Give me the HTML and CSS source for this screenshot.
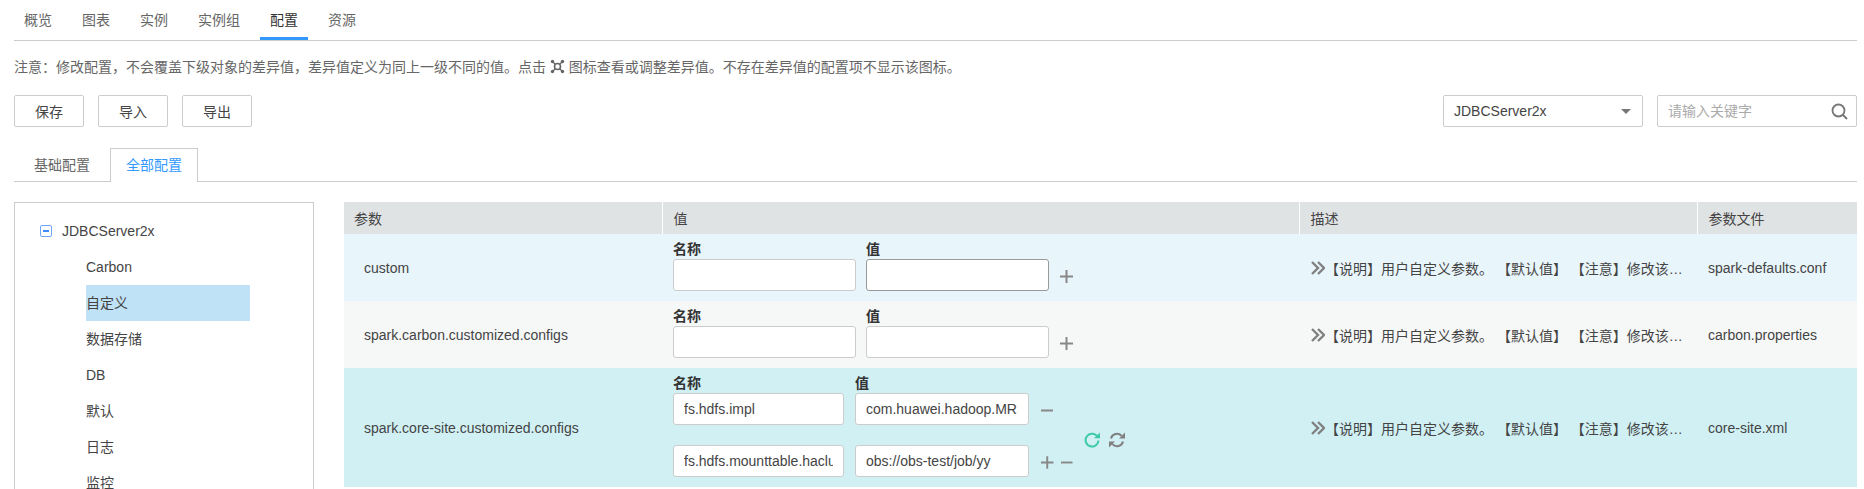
FILE: index.html
```html
<!DOCTYPE html>
<html lang="zh-CN">
<head>
    <meta charset="UTF-8">
    <meta name="viewport" content="width=device-width, initial-scale=1.0">
    <title>配置</title>
    <link rel="stylesheet" href="styles.css">
</head>
<body>
    <div class="page">
        <div class="main-tabs">
            <a class="main-tab">概览</a>
            <a class="main-tab">图表</a>
            <a class="main-tab">实例</a>
            <a class="main-tab">实例组</a>
            <a class="main-tab active">配置</a>
            <a class="main-tab">资源</a>
        </div>

        <p class="note">注意：修改配置，不会覆盖下级对象的差异值，差异值定义为同上一级不同的值。点击
            <svg class="note-icon" viewBox="0 0 15 15" width="15" height="15">
                <path d="M3 3L12 12M12 3L3 12" stroke="#666" stroke-width="1.3" fill="none"/>
                <circle cx="7.5" cy="7.5" r="3" fill="#fff" stroke="#666" stroke-width="1.6"/>
                <circle cx="2.5" cy="2.5" r="1.7" fill="#666"/>
                <circle cx="12.5" cy="2.5" r="1.7" fill="#666"/>
                <circle cx="2.5" cy="12.5" r="1.7" fill="#666"/>
                <circle cx="12.5" cy="12.5" r="1.7" fill="#666"/>
            </svg>
            图标查看或调整差异值。不存在差异值的配置项不显示该图标。</p>

        <div class="toolbar">
            <div class="btn-group">
                <button class="btn">保存</button>
                <button class="btn">导入</button>
                <button class="btn">导出</button>
            </div>
            <div class="filters">
                <div class="select">
                    <span>JDBCServer2x</span>
                    <i class="select-arrow"></i>
                </div>
                <div class="search">
                    <input type="text" placeholder="请输入关键字">
                    <svg viewBox="0 0 17 17" width="17" height="17">
                        <circle cx="7.5" cy="7.5" r="6" fill="none" stroke="#777" stroke-width="1.8"/>
                        <path d="M11.5 11.5L16 16" stroke="#777" stroke-width="2" fill="none"/>
                    </svg>
                </div>
            </div>
        </div>

        <div class="sub-tabs">
            <a class="sub-tab">基础配置</a>
            <a class="sub-tab active">全部配置</a>
        </div>

        <div class="content">
            <div class="tree">
                <div class="tree-root">
                    <i class="tree-toggle"></i>
                    <span>JDBCServer2x</span>
                </div>
                <ul class="tree-list">
                    <li>Carbon</li>
                    <li class="selected">自定义</li>
                    <li>数据存储</li>
                    <li>DB</li>
                    <li>默认</li>
                    <li>日志</li>
                    <li>监控</li>
                </ul>
            </div>

            <table class="config-table">
                <colgroup>
                    <col class="col-param">
                    <col class="col-value">
                    <col class="col-desc">
                    <col class="col-file">
                </colgroup>
                <thead>
                    <tr>
                        <th>参数</th>
                        <th>值</th>
                        <th>描述</th>
                        <th>参数文件</th>
                    </tr>
                </thead>
                <tbody>
                    <tr class="row-blue">
                        <td class="param">custom</td>
                        <td class="value">
                            <div class="kv kv-wide">
                                <label>名称</label>
                                <label>值</label>
                                <span></span>
                                <input type="text">
                                <input type="text" class="focused">
                                <div class="kv-actions">
                                    <svg class="op" viewBox="0 0 13 13" width="13" height="13"><path d="M6.5 0V13M0 6.5H13"/></svg>
                                </div>
                            </div>
                        </td>
                        <td class="desc">
                            <div class="desc-inner">
                                <svg class="chevrons" viewBox="0 0 14 14" width="14" height="14"><path d="M1 1L7 7L1 13M7 1L13 7L7 13"/></svg>
                                <span class="desc-text">【说明】用户自定义参数。 【默认值】 【注意】修改该…</span>
                            </div>
                        </td>
                        <td class="file">spark-defaults.conf</td>
                    </tr>
                    <tr class="row-grey">
                        <td class="param">spark.carbon.customized.configs</td>
                        <td class="value">
                            <div class="kv kv-wide">
                                <label>名称</label>
                                <label>值</label>
                                <span></span>
                                <input type="text">
                                <input type="text">
                                <div class="kv-actions">
                                    <svg class="op" viewBox="0 0 13 13" width="13" height="13"><path d="M6.5 0V13M0 6.5H13"/></svg>
                                </div>
                            </div>
                        </td>
                        <td class="desc">
                            <div class="desc-inner">
                                <svg class="chevrons" viewBox="0 0 14 14" width="14" height="14"><path d="M1 1L7 7L1 13M7 1L13 7L7 13"/></svg>
                                <span class="desc-text">【说明】用户自定义参数。 【默认值】 【注意】修改该…</span>
                            </div>
                        </td>
                        <td class="file">carbon.properties</td>
                    </tr>
                    <tr class="row-teal">
                        <td class="param">spark.core-site.customized.configs</td>
                        <td class="value">
                            <div class="kv-multi">
                                <div class="kv kv-narrow">
                                    <label>名称</label>
                                    <label>值</label>
                                    <span></span>
                                    <input type="text" value="fs.hdfs.impl">
                                    <input type="text" value="com.huawei.hadoop.MRSFileSystem">
                                    <div class="kv-actions">
                                        <svg class="op" viewBox="0 0 13 13" width="13" height="13"><path d="M0 6.5H12"/></svg>
                                    </div>
                                    <input type="text" value="fs.hdfs.mounttable.hacluster.link./job">
                                    <input type="text" value="obs://obs-test/job/yy">
                                    <div class="kv-actions">
                                        <svg class="op" viewBox="0 0 13 13" width="13" height="13"><path d="M6.5 0V13M0 6.5H13"/></svg>
                                        <svg class="op" viewBox="0 0 13 13" width="13" height="13"><path d="M0 6.5H12"/></svg>
                                    </div>
                                </div>
                                <div class="kv-sync">
                                    <svg viewBox="0 0 16 16" width="16" height="16">
                                        <path d="M13.6 5A6.4 6.4 0 1 0 14.4 8.5" fill="none" stroke="#3fcba8" stroke-width="2"/>
                                        <path d="M10 6.2H16V0.6Z" fill="#3fcba8"/>
                                    </svg>
                                    <svg viewBox="0 0 16 16" width="16" height="16">
                                        <path d="M2 6.5A6.2 6.2 0 0 1 12.6 3.8" fill="none" stroke="#808080" stroke-width="2"/>
                                        <path d="M10 6.4H16V0.6Z" fill="#808080"/>
                                        <path d="M14 9.5A6.2 6.2 0 0 1 3.4 12.2" fill="none" stroke="#808080" stroke-width="2"/>
                                        <path d="M6 9.6H0V15.4Z" fill="#808080"/>
                                    </svg>
                                </div>
                            </div>
                        </td>
                        <td class="desc">
                            <div class="desc-inner">
                                <svg class="chevrons" viewBox="0 0 14 14" width="14" height="14"><path d="M1 1L7 7L1 13M7 1L13 7L7 13"/></svg>
                                <span class="desc-text">【说明】用户自定义参数。 【默认值】 【注意】修改该…</span>
                            </div>
                        </td>
                        <td class="file">core-site.xml</td>
                    </tr>
                </tbody>
            </table>
        </div>
    </div>
</body>
</html>
```

FILE: styles.css
```css
html, body {
    margin: 0;
    height: 489px;
    overflow: hidden;
}
body {
    font-family: "Liberation Sans", "Noto Sans CJK SC", sans-serif;
    font-size: 14px;
    color: #444;
    background-color: #fff;
}
.page {
    padding: 0 7px 0 14px;
}

/* top tabs */
.main-tabs {
    display: flex;
    gap: 10px;
    border-bottom: 1px solid #ccc;
}
.main-tab {
    height: 37px;
    line-height: 40px;
    padding: 0 10px;
    color: #666;
    border-bottom: 3px solid transparent;
}
.main-tab.active {
    color: #333;
    border-bottom-color: #3399ff;
}

.note {
    margin: 16px 0 0;
    line-height: 20px;
    color: #666;
}
.note-icon {
    vertical-align: -2px;
}

/* toolbar */
.toolbar {
    display: flex;
    justify-content: space-between;
    margin-top: 18px;
}
.btn-group, .filters {
    display: flex;
    gap: 14px;
}
.btn {
    width: 70px;
    height: 32px;
    padding: 0;
    font: inherit;
    color: #444;
    background-color: #fff;
    border: 1px solid #ccc;
    border-radius: 2px;
}
.select, .search {
    display: flex;
    align-items: center;
    justify-content: space-between;
    box-sizing: border-box;
    width: 200px;
    height: 32px;
    border: 1px solid #ccc;
    border-radius: 2px;
}
.select {
    padding: 0 11px 0 10px;
}
.select-arrow {
    border-top: 5px solid #777;
    border-left: 5px solid transparent;
    border-right: 5px solid transparent;
}
.search {
    padding: 0 8px 0 10px;
}
.search input {
    flex: 1;
    min-width: 0;
    padding: 0;
    border: none;
    outline: none;
    font: inherit;
}
.search input::placeholder {
    color: #aaa;
}

/* sub tabs */
.sub-tabs {
    display: flex;
    gap: 4px;
    height: 33px;
    margin-top: 21px;
    padding-left: 4px;
    border-bottom: 1px solid #ccc;
}
.sub-tab {
    box-sizing: border-box;
    height: 34px;
    padding: 0 15px;
    line-height: 33px;
    color: #666;
    border: 1px solid transparent;
    border-bottom: none;
}
.sub-tab.active {
    color: #3399ff;
    background-color: #fff;
    border-color: #ccc;
}

.content {
    display: flex;
    gap: 30px;
    margin-top: 20px;
}

/* tree */
.tree {
    box-sizing: border-box;
    flex: none;
    width: 300px;
    height: 400px;
    padding: 10px 0 0 25px;
    border: 1px solid #ccc;
}
.tree-root {
    display: flex;
    align-items: center;
    gap: 10px;
    height: 36px;
}
.tree-toggle {
    box-sizing: border-box;
    display: flex;
    align-items: center;
    justify-content: center;
    width: 12px;
    height: 12px;
    border: 1px solid #6ea6ff;
    border-radius: 2px;
}
.tree-toggle::before {
    content: "";
    width: 6px;
    height: 2px;
    background-color: #3d8bff;
}
.tree-list {
    width: 164px;
    margin: 0 0 0 46px;
    padding: 0;
    list-style: none;
}
.tree-list li {
    height: 36px;
    line-height: 36px;
}
.tree-list li.selected {
    background-color: #c0e2f6;
}

/* table */
.config-table {
    flex: 1;
    table-layout: fixed;
    width: 1513px;
    height: 285px;
    border-collapse: collapse;
}
.col-param { width: 318px; }
.col-value { width: 637px; }
.col-desc { width: 398px; }
.config-table th {
    height: 32px;
    padding: 0 0 0 11px;
    font-weight: normal;
    text-align: left;
    color: #444;
    background-color: #e0e3e4;
    border-left: 1px solid #fff;
}
.config-table th:first-child {
    padding-left: 10px;
    border-left: none;
}
.config-table td {
    padding: 0;
    color: #444;
}
.row-blue td { background-color: #e8f5fb; }
.row-grey td { background-color: #f6f8f8; }
.row-teal td { background-color: #d0f0f4; }
.row-blue, .row-grey { height: 67px; }
.row-teal { height: 119px; }

.config-table .param {
    padding-left: 20px;
}
.config-table .value {
    vertical-align: top;
    padding: 7px 0 10px 11px;
}
.kv {
    display: grid;
    align-items: center;
    column-gap: 10px;
}
.kv label {
    height: 18px;
    line-height: 16px;
    font-weight: bold;
    color: #333;
}
.kv input {
    box-sizing: border-box;
    width: 100%;
    height: 32px;
    padding: 0 10px;
    font: inherit;
    color: #444;
    background-color: #fff;
    border: 1px solid #ccc;
    border-radius: 3px;
    outline: none;
}
.kv input.focused {
    border-color: #999;
}
.kv-wide {
    grid-template-columns: 183px 183px auto;
}
.kv-narrow {
    grid-template-columns: 171px 174px 33px;
    column-gap: 11px;
}
.kv-narrow input:nth-of-type(n+3) {
    margin-top: 20px;
}
.kv-narrow .kv-actions:last-of-type {
    margin-top: 20px;
}
.kv-actions {
    display: flex;
    gap: 7px;
    padding-top: 2px;
    margin-left: 1px;
}
.op {
    fill: none;
    stroke: #888;
    stroke-width: 2;
}
.kv-multi {
    display: flex;
}
.kv-sync {
    display: flex;
    align-items: center;
    gap: 9px;
    margin: 28px 0 0 11px;
}

.desc-inner {
    display: flex;
    align-items: center;
    padding: 0 14px 0 12px;
}
.chevrons {
    flex: none;
    fill: none;
    stroke: #808080;
    stroke-width: 2.4;
}
.desc-text {
    flex: 1;
    min-width: 0;
    white-space: nowrap;
}
.config-table .file {
    padding-left: 11px;
}
```
